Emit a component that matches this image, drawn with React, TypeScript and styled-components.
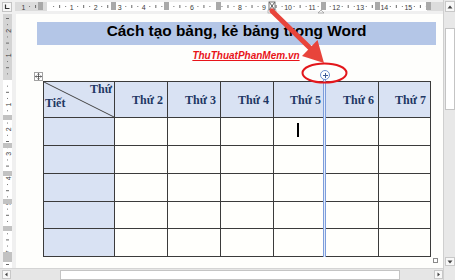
import React from "react";
import styled, { createGlobalStyle } from "styled-components";

const GlobalStyle = createGlobalStyle`
  html, body { margin: 0; padding: 0; background: #f0f0f0; }
  #root { width: 455px; height: 280px; overflow: hidden; }
`;

const Frame = styled.div`
  position: relative;
  width: 455px;
  height: 280px;
  display: grid;
  grid-template-columns: 443px 12px;
  background: #f0f0f0;
  font-family: "Liberation Sans", Arial, sans-serif;
  overflow: hidden;
`;

const MainCol = styled.div`
  display: flex;
  flex-direction: column;
  height: 280px;
`;

const TopBar = styled.div`
  display: flex;
  height: 14px;
  background: #f0f0f0;
`;

const Corner = styled.div`
  width: 15px;
  display: flex;
  padding: 2px 0 0 2px;
  box-sizing: border-box;
`;

const TabBox = styled.div`
  width: 10px;
  height: 10px;
  box-sizing: border-box;
  border: 1px solid #c4c4c4;
  background: #f7f7f7;
  display: flex;
  align-items: center;
  justify-content: center;
`;

const MiddleRow = styled.div`
  display: flex;
  height: 254px;
`;

const LeftRulerCol = styled.div`
  width: 16px;
  height: 254px;
  background: #f0f0f0;
`;

const Page = styled.div`
  flex: 1;
  display: flex;
  flex-direction: column;
  background: #fefefc;
  position: relative;
`;

const Title = styled.div`
  margin: 8px 7px 0 21px;
  height: 23px;
  background: #b4c6e7;
  color: #000;
  font-family: "Liberation Sans", Arial, sans-serif;
  font-weight: bold;
  font-size: 15.4px;
  line-height: 18px;
  text-align: center;
  white-space: nowrap;
`;

const Watermark = styled.div`
  margin-top: 5px;
  height: 12px;
  padding-left: 33px;
  text-align: center;
  font-family: "Liberation Sans", Arial, sans-serif;
  font-weight: bold;
  font-style: italic;
  font-size: 10px;
  line-height: 12px;
  color: #e8141a;
  text-decoration: underline;
  white-space: nowrap;
`;

const TableWrap = styled.div`
  position: relative;
  margin: 19px 0 0 27px;
  width: 388px;
`;

const Grid = styled.div`
  display: grid;
  grid-template-columns: 70px 52px 52px 52px 51px 52px 51px;
  grid-template-rows: 35px 27px 27px 27px 26px 27px;
  gap: 1px;
  padding: 1px;
  background: #3b3b3b;
  width: 388px;
  box-sizing: border-box;
`;

const Cell = styled.div<{ $shade?: boolean }>`
  background: ${(p) => (p.$shade ? "#d9e2f3" : "#fffffc")};
  position: relative;
`;

const HeadCell = styled.div`
  background: #d9e2f3;
  display: flex;
  align-items: center;
  justify-content: flex-end;
  padding-right: 4px;
  font-family: "Liberation Serif", "Times New Roman", serif;
  font-weight: bold;
  font-size: 12px;
  line-height: 14px;
  color: #1f3864;
  white-space: nowrap;
`;

const DiagCell = styled.div`
  background: #d9e2f3;
  position: relative;
  display: flex;
  flex-direction: column;
  font-family: "Liberation Serif", "Times New Roman", serif;
  font-weight: bold;
  font-size: 12px;
  line-height: 14px;
  color: #1f3864;
`;

const DiagTop = styled.span`
  text-align: right;
  padding-right: 2px;
`;

const DiagBottom = styled.span`
  text-align: left;
  padding-left: 1px;
`;

const DiagLine = styled.svg`
  position: absolute;
  left: 0;
  top: 0;
  width: 70px;
  height: 35px;
`;

const Caret = styled.div`
  width: 1.5px;
  height: 14px;
  background: #000;
  margin: 5px 0 0 23px;
`;

const MoveHandle = styled.div`
  position: absolute;
  left: -9px;
  top: -9px;
  width: 9px;
  height: 9px;
  box-sizing: border-box;
  border: 1px solid #a2a2a2;
  background: #fff;
  display: flex;
  align-items: center;
  justify-content: center;
`;

const ResizeHandle = styled.div`
  position: absolute;
  left: 390px;
  top: 177px;
  width: 5px;
  height: 5px;
  box-sizing: border-box;
  border: 1px solid #8a8a8a;
  background: #fff;
`;

const InsertLine = styled.div`
  position: absolute;
  left: 280px;
  top: -2px;
  width: 3px;
  height: 178px;
  box-sizing: border-box;
  border-left: 1px solid #7d9ddb;
  border-right: 1px solid #7d9ddb;
  background: #e4ecfa;
`;

const InsertButton = styled.div`
  position: absolute;
  left: 277px;
  top: -11px;
  width: 10px;
  height: 10px;
  box-sizing: border-box;
  border: 1px solid #6f8fcf;
  border-radius: 50%;
  background: #fff;
  &::before,
  &::after {
    content: "";
    position: absolute;
    background: #3d5a96;
  }
  &::before {
    left: 1.5px;
    top: 3.5px;
    width: 5px;
    height: 1px;
  }
  &::after {
    left: 3.5px;
    top: 1.5px;
    width: 1px;
    height: 5px;
  }
`;

const BottomBar = styled.div`
  display: flex;
  align-items: center;
  height: 12px;
  background: #e6e6e6;
  padding-left: 2px;
  border-top: 1px solid #d4d4d4;
  box-sizing: border-box;
`;

const ArrowBtn = styled.div`
  width: 9px;
  height: 9px;
  box-sizing: border-box;
  border: 1px solid #c8c8c8;
  background: #f8f8f8;
  display: flex;
  align-items: center;
  justify-content: center;
`;

const HThumb = styled.div`
  margin-left: 49px;
  width: 340px;
  height: 10px;
  box-sizing: border-box;
  border: 1px solid #c4c4c4;
  background: #ffffff;
`;

const Spacer = styled.div`
  flex: 1;
`;

const VScroll = styled.div`
  display: flex;
  flex-direction: column;
  align-items: center;
  height: 280px;
  background: #e8e8e8;
  border-left: 1px solid #cfcfcf;
  box-sizing: border-box;
`;

const UpBtn = styled.div`
  width: 10px;
  height: 11px;
  margin-top: 1px;
  box-sizing: border-box;
  border: 1px solid #c8c8c8;
  background: #f8f8f8;
  display: flex;
  align-items: center;
  justify-content: center;
`;

const VThumb = styled.div`
  margin-top: 16px;
  width: 10px;
  height: 82px;
  box-sizing: border-box;
  border: 1px solid #c4c4c4;
  background: #fff;
`;

const DownBtn = styled.div`
  width: 10px;
  height: 9px;
  margin-bottom: 14px;
  box-sizing: border-box;
  border: 1px solid #c8c8c8;
  background: #f8f8f8;
  display: flex;
  align-items: center;
  justify-content: center;
`;

const Overlay = styled.svg`
  position: absolute;
  left: 0;
  top: 0;
  width: 455px;
  height: 280px;
  pointer-events: none;
`;

const RulerText = styled.text`
  font-family: "Liberation Sans", Arial, sans-serif;
  font-size: 7px;
  fill: #3c3c3c;
`;

const TopRuler: React.FC = () => {
  const ox = 15;
  const zero = 47.6;
  const cm = 24.05;
  const blocks = [40, 113, 166, 218, 323, 377, 428];
  const hidden = [5, 7];
  const nums: React.ReactNode[] = [];
  const ticks: React.ReactNode[] = [];
  for (let n = -1; n <= 15; n++) {
    const x = zero + cm * n - ox;
    if (n !== 0 && !hidden.includes(n)) {
      nums.push(
        <RulerText key={"n" + n} x={x} y={9.5} textAnchor="middle">
          {Math.abs(n)}
        </RulerText>
      );
    }
    for (const f of [0.25, 0.5, 0.75]) {
      const tx = x + cm * f;
      if (tx > 427 - ox) continue;
      if (f === 0.5) {
        ticks.push(<rect key={`t${n}${f}`} x={tx - 0.5} y={5} width={1} height={3} fill="#6a6a6a" />);
      } else {
        ticks.push(<rect key={`t${n}${f}`} x={tx - 0.5} y={6} width={1} height={1} fill="#777" />);
      }
    }
  }
  return (
    <svg width={428} height={14} viewBox="0 0 428 14">
      <rect x={0} y={2} width={32} height={9} fill="#dcdcdc" />
      <rect x={32} y={2} width={380} height={9} fill="#ffffff" />
      <rect x={412} y={2} width={16} height={9} fill="#dcdcdc" />
      {ticks}
      {nums}
      {blocks.map((b) => (
        <rect key={b} x={b - ox - 2} y={2} width={5} height={8} fill="#a9a9a9" />
      ))}
      <rect x={269 - ox} y={2} width={6} height={8} fill="#fff" stroke="#555" strokeWidth={0.8} />
      <path d={`M${269.5 - ox} 2.5 L${274.5 - ox} 9.5 M${274.5 - ox} 2.5 L${269.5 - ox} 9.5`} stroke="#333" strokeWidth={0.8} />
      <rect x={268 - ox} y={10} width={8} height={3} fill="#f4f4f4" stroke="#999" strokeWidth={0.6} />
      <path d={`M${318 - ox} 13 L${321 - ox} 10 L${324 - ox} 13 Z`} fill="#f4f4f4" stroke="#888" strokeWidth={0.6} />
    </svg>
  );
};

const LeftRuler: React.FC = () => {
  const oy = 14;
  const zero = 80;
  const cm = 24.6;
  const blocks = [115, 143, 171, 199, 226];
  const nums: React.ReactNode[] = [];
  const ticks: React.ReactNode[] = [];
  for (let n = -3; n <= 8; n++) {
    const y = zero + cm * n - oy;
    if (n !== 0 && y > 2 && y < 250) {
      nums.push(
        <RulerText key={"n" + n} x={0} y={0} textAnchor="middle" transform={`translate(10.5 ${y}) rotate(-90)`}>
          {Math.abs(n)}
        </RulerText>
      );
    }
    for (const f of [0.25, 0.5, 0.75]) {
      const ty = y + cm * f;
      if (ty < 1 || ty > 252) continue;
      if (f === 0.5) {
        ticks.push(<rect key={`t${n}${f}`} x={6} y={ty - 0.5} width={3} height={1} fill="#6a6a6a" />);
      } else {
        ticks.push(<rect key={`t${n}${f}`} x={7} y={ty - 0.5} width={1} height={1} fill="#777" />);
      }
    }
  }
  return (
    <svg width={16} height={254} viewBox="0 0 16 254">
      <rect x={3} y={0} width={9} height={66} fill="#d4d4d4" />
      <rect x={3} y={66} width={9} height={188} fill="#ffffff" />
      {ticks}
      {nums}
      {blocks.map((b) => (
        <rect key={b} x={3} y={b - oy} width={9} height={5} fill="#c2c2c2" />
      ))}
      <rect x={3} y={252 - oy} width={9} height={10} fill="#c2c2c2" />
    </svg>
  );
};

const days = ["Thứ 2", "Thứ 3", "Thứ 4", "Thứ 5", "Thứ 6", "Thứ 7"];

const App: React.FC = () => {
  const body: React.ReactNode[] = [];
  for (let r = 0; r < 5; r++) {
    for (let c = 0; c < 7; c++) {
      body.push(
        <Cell key={`${r}-${c}`} $shade={c === 0}>
          {r === 0 && c === 4 ? <Caret /> : null}
        </Cell>
      );
    }
  }
  return (
    <>
      <GlobalStyle />
      <Frame>
        <MainCol>
          <TopBar>
            <Corner>
              <TabBox>
                <svg width={6} height={6} viewBox="0 0 6 6">
                  <path d="M1.5 0.5 V4.5 H5.5" stroke="#333" strokeWidth={1.2} fill="none" />
                </svg>
              </TabBox>
            </Corner>
            <TopRuler />
          </TopBar>
          <MiddleRow>
            <LeftRulerCol>
              <LeftRuler />
            </LeftRulerCol>
            <Page>
              <Title>Cách tạo bảng, kẻ bảng trong Word</Title>
              <Watermark>ThuThuatPhanMem.vn</Watermark>
              <TableWrap>
                <MoveHandle>
                  <svg width={7} height={7} viewBox="0 0 7 7">
                    <path d="M3.5 0.5 V6.5 M0.5 3.5 H6.5" stroke="#444" strokeWidth={0.8} />
                    <path d="M2.5 1.5 L3.5 0.3 L4.5 1.5 M2.5 5.5 L3.5 6.7 L4.5 5.5 M1.5 2.5 L0.3 3.5 L1.5 4.5 M5.5 2.5 L6.7 3.5 L5.5 4.5" stroke="#444" strokeWidth={0.7} fill="none" />
                  </svg>
                </MoveHandle>
                <Grid>
                  <DiagCell>
                    <DiagLine viewBox="0 0 70 35">
                      <line x1={0} y1={0} x2={70} y2={35} stroke="#444" strokeWidth={1} />
                    </DiagLine>
                    <DiagTop>Thứ</DiagTop>
                    <DiagBottom>Tiết</DiagBottom>
                  </DiagCell>
                  {days.map((d) => (
                    <HeadCell key={d}>{d}</HeadCell>
                  ))}
                  {body}
                </Grid>
                <InsertLine />
                <InsertButton />
                <ResizeHandle />
              </TableWrap>
            </Page>
          </MiddleRow>
          <BottomBar>
            <ArrowBtn>
              <svg width={5} height={5} viewBox="0 0 5 5">
                <path d="M3.5 0.5 L1 2.5 L3.5 4.5 Z" fill="#444" />
              </svg>
            </ArrowBtn>
            <HThumb />
            <Spacer />
            <ArrowBtn>
              <svg width={5} height={5} viewBox="0 0 5 5">
                <path d="M1.5 0.5 L4 2.5 L1.5 4.5 Z" fill="#444" />
              </svg>
            </ArrowBtn>
          </BottomBar>
        </MainCol>
        <VScroll>
          <UpBtn>
            <svg width={6} height={4} viewBox="0 0 6 4">
              <path d="M0.5 3.5 L3 0.5 L5.5 3.5 Z" fill="#444" />
            </svg>
          </UpBtn>
          <VThumb />
          <Spacer />
          <DownBtn>
            <svg width={6} height={4} viewBox="0 0 6 4">
              <path d="M0.5 0.5 L3 3.5 L5.5 0.5 Z" fill="#444" />
            </svg>
          </DownBtn>
        </VScroll>
        <Overlay viewBox="0 0 455 280">
          <line x1={272} y1={11} x2={310} y2={48} stroke="#e8443b" strokeWidth={5} strokeLinecap="round" />
          <path d="M324 63 L302 56 L317.5 40 Z" fill="#e8443b" />
          <ellipse cx={324.5} cy={73} rx={22} ry={9.5} fill="none" stroke="#e3161b" strokeWidth={2} />
        </Overlay>
      </Frame>
    </>
  );
};

export default App;
